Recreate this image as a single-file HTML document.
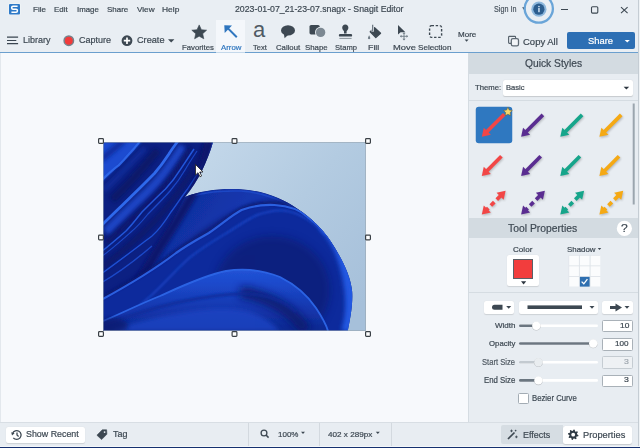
<!DOCTYPE html>
<html><head><meta charset="utf-8">
<style>
*{margin:0;padding:0;box-sizing:border-box}
html,body{width:640px;height:448px;overflow:hidden;background:#e9eef3;font-family:"Liberation Sans",sans-serif}
.a{position:absolute}
.t{position:absolute;white-space:nowrap;transform-origin:0 0;-webkit-text-stroke:0.2px currentColor}
svg{position:absolute;left:0;top:0}
</style></head><body>
<!-- backgrounds -->
<div class="a" style="left:0;top:0;width:640px;height:52px;background:#e9eef3"></div>
<div class="a" style="left:0;top:52px;width:638px;height:1px;background:#6b9fce"></div>
<div class="a" style="left:216px;top:20px;width:29px;height:32px;background:#f4f7fb"></div>
<div class="a" style="left:216px;top:52px;width:29px;height:1px;background:#c4d8ea"></div>
<div class="a" style="left:0;top:53px;width:468px;height:369px;background:#f7f9fc;border-left:1px solid #e3e8ed"></div>
<div class="a" style="left:468px;top:53px;width:170px;height:369px;background:#e8edf2;border-left:1px solid #d5dce2"></div>
<div class="a" style="left:469px;top:53px;width:169px;height:21px;background:#d3dbe1"></div>
<div class="a" style="left:469px;top:100px;width:169px;height:1px;background:#d5dce2"></div>
<div class="a" style="left:469px;top:218px;width:169px;height:20px;background:#d3dbe1"></div>
<div class="a" style="left:469px;top:292px;width:169px;height:1px;background:#d5dce2"></div>
<div class="a" style="left:0;top:422px;width:638px;height:25px;background:#e8edf2;border-top:1px solid #d8dee4"></div>
<div class="a" style="left:638px;top:0;width:1px;height:447px;background:#c5cdd4"></div>
<div class="a" style="left:639px;top:0;width:1px;height:447px;background:#eef2f5"></div>
<div class="a" style="left:0;top:446px;width:640px;height:1px;background:#f3f6f9"></div>
<div class="a" style="left:0;top:447px;width:640px;height:1px;background:#15306f"></div>
<div class="a" style="left:248px;top:423px;width:1px;height:23px;background:#d3d9df"></div>
<div class="a" style="left:319px;top:423px;width:1px;height:23px;background:#d3d9df"></div>
<div class="a" style="left:391px;top:423px;width:1px;height:23px;background:#d3d9df"></div>

<!-- buttons -->
<div class="a" style="left:567px;top:32px;width:68px;height:17.4px;background:#2d6fb4;border-radius:2px"></div>
<div class="a" style="left:503px;top:80px;width:130px;height:16px;background:#fff;border-radius:2px;box-shadow:0 0.5px 1px rgba(0,0,0,.15)"></div>
<div class="a" style="left:6px;top:427px;width:79px;height:16px;background:#fff;border-radius:2px;box-shadow:0 0.5px 1px rgba(0,0,0,.12)"></div>
<div class="a" style="left:501px;top:425px;width:62px;height:18.5px;background:#d6dde3;border-radius:2px 0 0 2px"></div>
<div class="a" style="left:563px;top:426px;width:69px;height:17.5px;background:#fff;border-radius:2.5px;box-shadow:0 0.5px 1px rgba(0,0,0,.15)"></div>
<!-- tool properties controls -->
<div class="a" style="left:507px;top:255px;width:32px;height:31px;background:#fff;border-radius:2px;box-shadow:0 0.5px 1px rgba(0,0,0,.12)"></div>
<div class="a" style="left:513px;top:259px;width:20px;height:19.5px;background:#f23d3d;border:1px solid #5a6068"></div>
<div class="a" style="left:484px;top:301px;width:30px;height:13px;background:#fff;border-radius:2px;box-shadow:0 0.5px 1px rgba(0,0,0,.12)"></div>
<div class="a" style="left:519px;top:301px;width:79px;height:13px;background:#fff;border-radius:2px;box-shadow:0 0.5px 1px rgba(0,0,0,.12)"></div>
<div class="a" style="left:602px;top:301px;width:31px;height:13px;background:#fff;border-radius:2px;box-shadow:0 0.5px 1px rgba(0,0,0,.12)"></div>
<div class="a" style="left:602px;top:319.5px;width:31px;height:12.5px;background:#fff;border:1px solid #a9b1b8;border-radius:1.5px"></div>
<div class="a" style="left:602px;top:338px;width:31px;height:12.5px;background:#fff;border:1px solid #a9b1b8;border-radius:1.5px"></div>
<div class="a" style="left:602px;top:356px;width:31px;height:12.5px;background:#eef1f4;border:1px solid #c5ccd2;border-radius:1.5px"></div>
<div class="a" style="left:602px;top:374.5px;width:31px;height:12.5px;background:#fff;border:1px solid #a9b1b8;border-radius:1.5px"></div>
<div class="a" style="left:518px;top:392.5px;width:11px;height:11px;background:#fff;border:1px solid #a3acb4;border-radius:1.5px"></div>

<!--SVG-->
<svg width="640" height="448" viewBox="0 0 640 448">
<defs>
<clipPath id="imgclip"><rect x="103" y="142" width="263" height="189"/></clipPath>
<clipPath id="massclip"><path d="M103,142 L213,142 C208,160 198,182 185,197 C200,191 218,188.5 240,189.2 C262,190 284,199 297,208.4 C312,218 326,232 335.4,248.7 C344,263 351,278 352.2,291.8 C353,305 350,320 347.8,331 L103,331 Z"/></clipPath>
<linearGradient id="bgG" x1="190" y1="150" x2="366" y2="300" gradientUnits="userSpaceOnUse"><stop offset="0" stop-color="#c4d8ea"/><stop offset="0.5" stop-color="#b3cbe1"/><stop offset="1" stop-color="#a6c0da"/></linearGradient>
<radialGradient id="p2G" cx="272" cy="300" r="88" gradientUnits="userSpaceOnUse" gradientTransform="translate(272 300) scale(0.95 1.05) translate(-272 -300)"><stop offset="0" stop-color="#07145e"/><stop offset="0.5" stop-color="#0b1f7e"/><stop offset="0.78" stop-color="#1330a4"/><stop offset="0.93" stop-color="#1c4ad0"/><stop offset="1" stop-color="#2056e0"/></radialGradient>
<linearGradient id="p1G" x1="190" y1="195" x2="345" y2="300" gradientUnits="userSpaceOnUse"><stop offset="0" stop-color="#1030a0"/><stop offset="0.45" stop-color="#173cb8"/><stop offset="1" stop-color="#2058e2"/></linearGradient>
<linearGradient id="p3G" x1="230" y1="262" x2="230" y2="331" gradientUnits="userSpaceOnUse"><stop offset="0" stop-color="#2458dc"/><stop offset="0.3" stop-color="#1c4acc"/><stop offset="0.7" stop-color="#1436ac"/><stop offset="1" stop-color="#0e2890"/></linearGradient>
<filter id="b05" x="-20%" y="-20%" width="140%" height="140%"><feGaussianBlur stdDeviation="0.5"/></filter>
<filter id="b1" x="-20%" y="-20%" width="140%" height="140%"><feGaussianBlur stdDeviation="1"/></filter>
<filter id="b2" x="-20%" y="-20%" width="140%" height="140%"><feGaussianBlur stdDeviation="2.2"/></filter>
<filter id="b4" x="-30%" y="-30%" width="160%" height="160%"><feGaussianBlur stdDeviation="4"/></filter>
</defs>
<g clip-path="url(#imgclip)">
<rect x="103" y="142" width="263" height="189" fill="url(#bgG)"/>
<g clip-path="url(#massclip)">
<rect x="103" y="142" width="263" height="189" fill="#0c2082"/>
<!-- left petals -->
<path d="M100,142 L142,142 C130,154 116,168 100,184 Z" fill="#1c4bd0" filter="url(#b1)"/>
<path d="M100,160 C108,154 116,148 124,140" fill="none" stroke="#0f2c9c" stroke-width="6" filter="url(#b2)"/>
<path d="M101,181 C106,176 112,170 118.6,165.4 C124,160 130,153 134.25,148.25 C136,146 138,144 140,141" fill="none" stroke="#2d66e8" stroke-width="2.2" filter="url(#b05)"/>
<path d="M104,190 C115,180 128,166 145,148" fill="none" stroke="#1434aa" stroke-width="5" filter="url(#b2)" opacity="0.6"/>
<path d="M112,200 C125,188 140,172 158,150" fill="none" stroke="#07145e" stroke-width="8" filter="url(#b2)" opacity="0.7"/>
<!-- S2 ridge with trailing medium shade on lower-right -->
<path d="M106,232 C118,220 130,208 140,199 C150,190 160,179 166,171 C172,163 178,155 183,146" fill="none" stroke="#1a44c4" stroke-width="9" filter="url(#b2)"/>
<path d="M101,226 C115,212 128,200 134.25,193.6 C142,186 150,178 154.6,173.25 C160,167 165,160 168.6,154.5 C172,149 175,145 178,141" fill="none" stroke="#2f69ec" stroke-width="2.8" filter="url(#b05)"/>
<path d="M106,243 C120,230 140,212 152,200 C165,187 176,172 190,148" fill="none" stroke="#091866" stroke-width="5" filter="url(#b2)" opacity="0.8"/>
<!-- thin lines S3 -->
<path d="M101,252 C110,245 118,238 126,231 C132,225 138,217 142,212 C150,204 158,196 165.5,189 C172,182 177,175 181,168.6 C186,161 190,155 194,149" fill="none" stroke="#2257da" stroke-width="1.5" filter="url(#b05)"/>
<path d="M101,257 C112,249 122,240 131,232 C138,226 144,219 148,214 C156,206 164,198 170,191 C176,184 181,177 185,170 C189,163 193,157 197,151" fill="none" stroke="#1b48c8" stroke-width="1.2" filter="url(#b05)"/>
<path d="M101,268 C125,250 150,228 168,206 C182,188 196,168 209,140" fill="none" stroke="#081664" stroke-width="6" filter="url(#b2)" opacity="0.7"/>
<path d="M101,274 C118,262 136,248 152,236 C160,229 166,220 171,212 C177,204 182,196 187.8,188.7 C193,181 198,173 202.7,165 C207,157 210,150 213.5,141" fill="none" stroke="#1e50d4" stroke-width="1.4" filter="url(#b05)"/>
<path d="M101,283 C120,272 138,258 152,246" fill="none" stroke="#1b48c8" stroke-width="1.4" filter="url(#b05)"/>
<!-- P1 outer petal -->
<path d="M140,290 C160,250 175,215 185,197 C200,191 218,188.5 240,189.2 C262,190 284,199 297,208.4 C312,218 326,232 335.4,248.7 C344,263 351,278 352.2,291.8 C353,305 350,320 347.8,331 L300,331 Z" fill="url(#p1G)" filter="url(#b05)"/>
<path d="M186,198.5 C200,192.5 218,190.5 240,191 C262,192 284,201 297,210.5" fill="none" stroke="#1c46c4" stroke-width="1.5" filter="url(#b05)"/>
<path d="M128,300 C150,262 172,230 188,202 C198,186 205,165 209,142" fill="none" stroke="#09186c" stroke-width="9" filter="url(#b2)"/>
<!-- dark band (P0 -> P2 shadow) -->
<path d="M101,302 C118,292 134,282 150,272 C168,260 185,248 200,236 C215,226 232,214 255,206 C270,202 280,202 290,203" fill="none" stroke="#0a1868" stroke-width="7" filter="url(#b2)" opacity="0.55"/>
<!-- P2 petal (top edge = arc a) -->
<path d="M101,300 C125,287 150,273 176,253 C190,243 200,238 208.8,233 C222,224 232,215 241.6,210 C252,206 263,204.5 274.5,205 C290,206 300,210 307.3,216.8 C318,225 326,232 332,242 C340,255 346,270 349,290 C350,305 349,320 347,331 L101,331 Z" fill="#112b9c" filter="url(#b05)"/>
<ellipse cx="272" cy="290" rx="58" ry="54" fill="#081762" opacity="0.5" filter="url(#b4)"/>
<path d="M101,298.5 C125,285.5 150,271.5 176,251.5 C190,241.5 200,236.5 208.8,231.5 C222,222.5 232,213.5 241.6,208.5 C252,204.5 263,203 274.5,203.5 C290,204.5 300,208.5 307.3,215.3 C318,223.5 326,230.5 332,240.5" fill="none" stroke="#0a1a70" stroke-width="3" filter="url(#b1)" opacity="0.7"/>
<path d="M101,300 C125,287 150,273 176,253 C190,243 200,238 208.8,233 C222,224 232,215 241.6,210 C252,206 263,204.5 274.5,205 C290,206 300,210 307.3,216.8 C318,225 326,232 332,242" fill="none" stroke="#2a5fe0" stroke-width="2.2" filter="url(#b05)"/>
<path d="M140,305 C160,290 178,266 193,255 C205,246 215,240 225,234 C238,226 248,219 257,215 C268,211 276,210 283,210.5 C298,212 312,220 325,235" fill="none" stroke="#1d4acc" stroke-width="2" filter="url(#b1)" opacity="0.8"/>
<path d="M322,226 C337,241 345,263 348.5,290 C350,305 349,320 345,331" fill="none" stroke="#2258e2" stroke-width="8" filter="url(#b2)"/>
<!-- P3 lower fold (top edge = arc b) -->
<path d="M101,322 C120,314 140,304 160,296 C180,287 205,275 226,271 C245,268 262,270 280,277 C296,285 308,296 316,308 C322,317 326,324 328,331 L101,331 Z" fill="url(#p3G)" filter="url(#b05)"/>
<path d="M101,322 C120,314 140,304 160,296 C180,287 205,275 226,271 C245,268 262,270 280,277 C296,285 308,296 316,308 C322,317 326,324 328,331" fill="none" stroke="#2c64e4" stroke-width="1.8" filter="url(#b05)"/>
<path d="M240,292 C268,296 292,310 306,331" fill="none" stroke="#081664" stroke-width="12" opacity="0.8" filter="url(#b4)"/>
<path d="M101,326 C125,318 150,308 180,302 C205,297 232,293 250,294 C270,296 286,302 296,312" fill="none" stroke="#0e2a98" stroke-width="3" filter="url(#b1)" opacity="0.8"/>
<path d="M110,331 C140,320 175,312 210,309 C240,307 262,312 280,331 Z" fill="#1a45c4" filter="url(#b2)" opacity="0.8"/>
<ellipse cx="112" cy="326" rx="16" ry="8" fill="#081664" opacity="0.6" filter="url(#b2)"/>
</g>
<rect x="103.5" y="142.5" width="262" height="188" fill="none" stroke="#9aa6b2" stroke-width="1" opacity="0.6"/>
</g>
<!-- cursor -->
<path d="M195.5,164.5 L195.5,175 L198,172.7 L200,176.8 L201.6,176 L199.7,172 L203,172 Z" fill="#fff" stroke="#222" stroke-width="0.8" stroke-linejoin="round"/>
<!-- handles -->
<g fill="#fff" stroke="#3a4046" stroke-width="1.2">
<rect x="98.6" y="138.6" width="4.8" height="4.8" rx="0.8"/>
<rect x="232.1" y="138.6" width="4.8" height="4.8" rx="0.8"/>
<rect x="365.6" y="138.6" width="4.8" height="4.8" rx="0.8"/>
<rect x="98.6" y="235.1" width="4.8" height="4.8" rx="0.8"/>
<rect x="365.6" y="235.1" width="4.8" height="4.8" rx="0.8"/>
<rect x="98.6" y="331.6" width="4.8" height="4.8" rx="0.8"/>
<rect x="232.1" y="331.6" width="4.8" height="4.8" rx="0.8"/>
<rect x="365.6" y="331.6" width="4.8" height="4.8" rx="0.8"/>
</g>
<g fill="#3d4852" stroke="none">
<!-- logo -->
<rect x="8.5" y="3.5" width="12" height="11.5" rx="1" fill="#f4f7fa"/>
<rect x="9" y="4" width="11" height="10.5" rx="1" fill="#2f7ac8"/>
<path d="M17.6,6.2 H13 Q11.7,6.2 11.7,7.4 V8 Q11.7,9.2 13,9.2 H16.1 Q17.4,9.2 17.4,10.4 V11.1 Q17.4,12.3 16.1,12.3 H11.4" fill="none" stroke="#fff" stroke-width="1.5"/>
<!-- sign in caret -->
<polygon points="522.2,7.3 525.2,7.3 523.7,9.7"/>
<!-- ring + info -->
<circle cx="538.8" cy="8.6" r="14.1" fill="none" stroke="#6aa5d8" stroke-width="2.3"/>
<circle cx="538.9" cy="9.2" r="7.6" fill="#8db7dc"/>
<circle cx="538.9" cy="9.2" r="5.6" fill="#2c5d8e"/>
<rect x="538.2" y="8" width="1.5" height="4.2" fill="#cfe2f2"/>
<circle cx="538.95" cy="6.5" r="0.85" fill="#cfe2f2"/>
<!-- window controls -->
<line x1="561" y1="9.5" x2="568" y2="9.5" stroke="#3d4852" stroke-width="1"/>
<rect x="591.5" y="6.8" width="6.3" height="6.3" rx="1" fill="none" stroke="#3d4852" stroke-width="1.1"/>
<path d="M621,7.2 L627.6,13.2 M627.6,7.2 L621,13.2" stroke="#3d4852" stroke-width="1.1"/>
<!-- hamburger -->
<path d="M7,37.2 H18.1 M7,40.5 H16.3 M7,43.7 H18.1" stroke="#3a4550" stroke-width="1.2"/>
<!-- capture -->
<circle cx="68.8" cy="40.7" r="4.7" fill="#f23b3b" stroke="#76818b" stroke-width="1.5"/>
<!-- create -->
<circle cx="127" cy="40.7" r="5.4" fill="#3d4852"/>
<path d="M123.8,40.7 H130.2 M127,37.5 V43.9" stroke="#fff" stroke-width="1.7"/>
<polygon points="168,39.3 174.4,39.3 171.2,42.6"/>
<!-- star -->
<polygon points="199.2,24.9 201.4,29.7 206.6,30.2 202.7,33.7 203.8,38.8 199.2,36.2 194.6,38.8 195.7,33.7 191.8,30.2 197,29.7" stroke="#3d4852" stroke-width="0.6" stroke-linejoin="round"/>
<!-- arrow tool -->
<line x1="236.8" y1="37.2" x2="227" y2="27.4" stroke="#2f76bf" stroke-width="2"/>
<polygon points="224.3,25.2 232,25.6 224.7,32.9" fill="#2f76bf"/>
<!-- callout -->
<ellipse cx="288" cy="30.4" rx="7" ry="5.2"/>
<polygon points="283.8,33.5 288,35 284.6,38.2"/>
<!-- shape -->
<rect x="309.5" y="25" width="10.2" height="9.4" rx="1.6"/>
<circle cx="320.6" cy="32.4" r="5.6" fill="#e9eef3"/>
<circle cx="320.6" cy="32.4" r="4.7" fill="#7c8892"/>
<!-- stamp -->
<path d="M345.3,24.5 C347.2,24.5 348.4,26 348.4,27.7 C348.4,29.2 347.3,30.2 346.6,31.2 L346.6,33.6 L344,33.6 L344,31.2 C343.3,30.2 342.2,29.2 342.2,27.7 C342.2,26 343.4,24.5 345.3,24.5Z"/>
<rect x="338.9" y="33.9" width="13.2" height="2.7" rx="1.2"/>
<rect x="339.4" y="37.9" width="12.2" height="1" fill="#8a949c"/>
<!-- fill -->
<polygon points="374.6,27.6 380.6,33.2 375.8,37.6 370.2,31.8" stroke="#3d4852" stroke-width="1.2" stroke-linejoin="round"/>
<line x1="372.7" y1="24.8" x2="372.7" y2="31.6" stroke="#e9eef3" stroke-width="2.6"/>
<line x1="372.7" y1="24.8" x2="372.7" y2="31.2" stroke="#5a6670" stroke-width="1.1"/>
<path d="M369.1,35.2 Q367.7,37.4 367.9,38.4 Q369.1,40 370.3,38.4 Q370.5,37.4 369.1,35.2Z" fill="#6e7a84"/>
<!-- move -->
<polygon points="398,25 398,34.6 400.6,32.2 405.4,32.2"/>
<path d="M404,33 V39.6 M400.6,36.3 H407.4" stroke="#6e7a84" stroke-width="0.9"/><polygon points="404,32.2 405.5,33.8 402.5,33.8" fill="#6e7a84"/><polygon points="404,40.4 405.5,38.8 402.5,38.8" fill="#6e7a84"/><polygon points="399.9,36.3 401.5,34.8 401.5,37.8" fill="#6e7a84"/><polygon points="408.1,36.3 406.5,34.8 406.5,37.8" fill="#6e7a84"/>
<!-- selection -->
<rect x="429.6" y="25.6" width="12" height="11.8" rx="2" fill="none" stroke="#3d4852" stroke-width="1.4" stroke-dasharray="2.4 1.7"/>
<polygon points="464.6,39.6 468.6,39.6 466.6,41.8"/>
<!-- copy all -->
<rect x="508.6" y="36.4" width="7" height="7" rx="0.8" fill="none" stroke="#55606a" stroke-width="1.1"/>
<rect x="511.3" y="38.7" width="7.2" height="7.2" rx="1.6" fill="#f2f5f8" stroke="#5f6a74" stroke-width="1.3"/>
<polygon points="624.7,40 629.8,40 627.25,42.5" fill="#fff"/>
</g>
<defs><filter id="blur1" x="-50%" y="-50%" width="200%" height="200%"><feGaussianBlur stdDeviation="0.8"/></filter><filter id="sh" x="-50%" y="-50%" width="200%" height="200%"><feGaussianBlur stdDeviation="0.6"/></filter></defs>
<rect x="475.75" y="106.75" width="36.5" height="36.5" rx="3" fill="#2f78c0"/>
<line x1="486.76" y1="131.74" x2="504.30" y2="114.20" stroke="#f24646" stroke-width="3.7" stroke-linecap="butt"/><polygon points="481.80,136.70 490.85,134.72 483.78,127.65" fill="#f24646"/>
<g transform="translate(0.8,1.2)" opacity="0.22" filter="url(#blur1)"><line x1="486.76" y1="170.94" x2="501.40" y2="156.30" stroke="#000" stroke-width="3.7" stroke-linecap="butt"/><polygon points="481.80,175.90 490.85,173.92 483.78,166.85" fill="#000"/></g>
<line x1="486.76" y1="170.94" x2="501.40" y2="156.30" stroke="#f24646" stroke-width="3.7" stroke-linecap="butt"/><polygon points="481.80,175.90 490.85,173.92 483.78,166.85" fill="#f24646"/>
<g transform="translate(0.8,1.2)" opacity="0.22" filter="url(#blur1)"><line x1="486.76" y1="209.64" x2="500.64" y2="195.76" stroke="#000" stroke-width="3.7" stroke-dasharray="2.2 3.6 4.8 3.6 20"/><polygon points="481.80,214.60 490.85,212.62 483.78,205.55" fill="#000"/><polygon points="505.60,190.80 503.62,199.85 496.55,192.78" fill="#000"/></g>
<line x1="486.76" y1="209.64" x2="500.64" y2="195.76" stroke="#f24646" stroke-width="3.7" stroke-dasharray="2.2 3.6 4.8 3.6 20"/><polygon points="481.80,214.60 490.85,212.62 483.78,205.55" fill="#f24646"/><polygon points="505.60,190.80 503.62,199.85 496.55,192.78" fill="#f24646"/>
<g transform="translate(0.8,1.2)" opacity="0.22" filter="url(#blur1)"><line x1="526.06" y1="131.74" x2="542.90" y2="114.90" stroke="#000" stroke-width="3.7" stroke-linecap="butt"/><polygon points="521.10,136.70 530.15,134.72 523.08,127.65" fill="#000"/></g>
<line x1="526.06" y1="131.74" x2="542.90" y2="114.90" stroke="#5a2d91" stroke-width="3.7" stroke-linecap="butt"/><polygon points="521.10,136.70 530.15,134.72 523.08,127.65" fill="#5a2d91"/>
<g transform="translate(0.8,1.2)" opacity="0.22" filter="url(#blur1)"><line x1="526.06" y1="170.94" x2="540.70" y2="156.30" stroke="#000" stroke-width="3.7" stroke-linecap="butt"/><polygon points="521.10,175.90 530.15,173.92 523.08,166.85" fill="#000"/></g>
<line x1="526.06" y1="170.94" x2="540.70" y2="156.30" stroke="#5a2d91" stroke-width="3.7" stroke-linecap="butt"/><polygon points="521.10,175.90 530.15,173.92 523.08,166.85" fill="#5a2d91"/>
<g transform="translate(0.8,1.2)" opacity="0.22" filter="url(#blur1)"><line x1="526.06" y1="209.64" x2="539.94" y2="195.76" stroke="#000" stroke-width="3.7" stroke-dasharray="2.2 3.6 4.8 3.6 20"/><polygon points="521.10,214.60 530.15,212.62 523.08,205.55" fill="#000"/><polygon points="544.90,190.80 542.92,199.85 535.85,192.78" fill="#000"/></g>
<line x1="526.06" y1="209.64" x2="539.94" y2="195.76" stroke="#5a2d91" stroke-width="3.7" stroke-dasharray="2.2 3.6 4.8 3.6 20"/><polygon points="521.10,214.60 530.15,212.62 523.08,205.55" fill="#5a2d91"/><polygon points="544.90,190.80 542.92,199.85 535.85,192.78" fill="#5a2d91"/>
<g transform="translate(0.8,1.2)" opacity="0.22" filter="url(#blur1)"><line x1="565.26" y1="131.74" x2="582.10" y2="114.90" stroke="#000" stroke-width="3.7" stroke-linecap="butt"/><polygon points="560.30,136.70 569.35,134.72 562.28,127.65" fill="#000"/></g>
<line x1="565.26" y1="131.74" x2="582.10" y2="114.90" stroke="#16a58b" stroke-width="3.7" stroke-linecap="butt"/><polygon points="560.30,136.70 569.35,134.72 562.28,127.65" fill="#16a58b"/>
<g transform="translate(0.8,1.2)" opacity="0.22" filter="url(#blur1)"><line x1="565.26" y1="170.94" x2="579.90" y2="156.30" stroke="#000" stroke-width="3.7" stroke-linecap="butt"/><polygon points="560.30,175.90 569.35,173.92 562.28,166.85" fill="#000"/></g>
<line x1="565.26" y1="170.94" x2="579.90" y2="156.30" stroke="#16a58b" stroke-width="3.7" stroke-linecap="butt"/><polygon points="560.30,175.90 569.35,173.92 562.28,166.85" fill="#16a58b"/>
<g transform="translate(0.8,1.2)" opacity="0.22" filter="url(#blur1)"><line x1="565.26" y1="209.64" x2="579.14" y2="195.76" stroke="#000" stroke-width="3.7" stroke-dasharray="2.2 3.6 4.8 3.6 20"/><polygon points="560.30,214.60 569.35,212.62 562.28,205.55" fill="#000"/><polygon points="584.10,190.80 582.12,199.85 575.05,192.78" fill="#000"/></g>
<line x1="565.26" y1="209.64" x2="579.14" y2="195.76" stroke="#16a58b" stroke-width="3.7" stroke-dasharray="2.2 3.6 4.8 3.6 20"/><polygon points="560.30,214.60 569.35,212.62 562.28,205.55" fill="#16a58b"/><polygon points="584.10,190.80 582.12,199.85 575.05,192.78" fill="#16a58b"/>
<g transform="translate(0.8,1.2)" opacity="0.22" filter="url(#blur1)"><line x1="604.36" y1="131.74" x2="621.20" y2="114.90" stroke="#000" stroke-width="3.7" stroke-linecap="butt"/><polygon points="599.40,136.70 608.45,134.72 601.38,127.65" fill="#000"/></g>
<line x1="604.36" y1="131.74" x2="621.20" y2="114.90" stroke="#f5a914" stroke-width="3.7" stroke-linecap="butt"/><polygon points="599.40,136.70 608.45,134.72 601.38,127.65" fill="#f5a914"/>
<g transform="translate(0.8,1.2)" opacity="0.22" filter="url(#blur1)"><line x1="604.36" y1="170.94" x2="619.00" y2="156.30" stroke="#000" stroke-width="3.7" stroke-linecap="butt"/><polygon points="599.40,175.90 608.45,173.92 601.38,166.85" fill="#000"/></g>
<line x1="604.36" y1="170.94" x2="619.00" y2="156.30" stroke="#f5a914" stroke-width="3.7" stroke-linecap="butt"/><polygon points="599.40,175.90 608.45,173.92 601.38,166.85" fill="#f5a914"/>
<g transform="translate(0.8,1.2)" opacity="0.22" filter="url(#blur1)"><line x1="604.36" y1="209.64" x2="618.24" y2="195.76" stroke="#000" stroke-width="3.7" stroke-dasharray="2.2 3.6 4.8 3.6 20"/><polygon points="599.40,214.60 608.45,212.62 601.38,205.55" fill="#000"/><polygon points="623.20,190.80 621.22,199.85 614.15,192.78" fill="#000"/></g>
<line x1="604.36" y1="209.64" x2="618.24" y2="195.76" stroke="#f5a914" stroke-width="3.7" stroke-dasharray="2.2 3.6 4.8 3.6 20"/><polygon points="599.40,214.60 608.45,212.62 601.38,205.55" fill="#f5a914"/><polygon points="623.20,190.80 621.22,199.85 614.15,192.78" fill="#f5a914"/>
<polygon points="507.90,107.30 509.25,110.04 512.27,110.48 510.09,112.61 510.60,115.62 507.90,114.20 505.20,115.62 505.71,112.61 503.53,110.48 506.55,110.04" fill="#f5d66b" stroke="#6b5a2a" stroke-width="0.5" stroke-linejoin="round"/>
<polygon points="623.6,86.8 629.2,86.8 626.4,89.4" fill="#2d3640"/>
<rect x="632.7" y="103.5" width="2" height="101" fill="#9ba5ae"/>
<circle cx="624.4" cy="228.4" r="7.6" fill="#fff"/>
<polygon points="521,281.3 526.2,281.3 523.6,284.4" fill="#2d3640"/>
<rect x="568.5" y="255" width="31.6" height="31.6" fill="#dfe4e9" rx="1"/>
<rect x="569.20" y="255.70" width="9.7" height="9.7" fill="#fbfcfd"/>
<rect x="579.90" y="255.70" width="9.7" height="9.7" fill="#fbfcfd"/>
<rect x="590.60" y="255.70" width="9.7" height="9.7" fill="#fbfcfd"/>
<rect x="569.20" y="266.30" width="9.7" height="9.7" fill="#fbfcfd"/>
<rect x="579.90" y="266.30" width="9.7" height="9.7" fill="#fbfcfd"/>
<rect x="590.60" y="266.30" width="9.7" height="9.7" fill="#fbfcfd"/>
<rect x="569.20" y="276.90" width="9.7" height="9.7" fill="#fbfcfd"/>
<rect x="579.90" y="276.90" width="9.7" height="9.7" fill="#2f6fb0"/>
<rect x="590.60" y="276.90" width="9.7" height="9.7" fill="#fbfcfd"/>
<path d="M581.6,281.6 L583.8,283.8 L587.4,279.2" fill="none" stroke="#fff" stroke-width="1.3"/>
<polygon points="597.8,248 601.2,248 599.5,250" fill="#3d4852"/>
<path d="M494.5,304.8 H502.5 V309.8 H494.5 Q492,309.8 492,307.3 Q492,304.8 494.5,304.8Z" fill="#3d4852"/>
<polygon points="506.2,306.1 511.2,306.1 508.7,308.7" fill="#3d4852"/>
<polygon points="589.5,306.1 594.5,306.1 592.0,308.7" fill="#3d4852"/>
<polygon points="624.5,306.1 629.5,306.1 627.0,308.7" fill="#3d4852"/>
<rect x="527.5" y="305.4" width="54.5" height="3.6" fill="#3d4852"/>
<polygon points="610,306 615.5,306 615.5,303.5 622,307.5 615.5,311.5 615.5,309 610,309" fill="#3d4852"/>
<rect x="519" y="324.5" width="79" height="2.6" rx="1.3" fill="#fff"/>
<rect x="519" y="324.5" width="17.3" height="2.6" rx="1.3" fill="#6b7680"/>
<circle cx="536.3" cy="326.2" r="4.4" fill="#000" opacity="0.18" filter="url(#sh)"/>
<circle cx="536.3" cy="325.8" r="4.2" fill="#fff"/>
<rect x="519" y="342.2" width="79" height="2.6" rx="1.3" fill="#fff"/>
<rect x="519" y="342.2" width="74.2" height="2.6" rx="1.3" fill="#6b7680"/>
<circle cx="593.2" cy="343.9" r="4.4" fill="#000" opacity="0.18" filter="url(#sh)"/>
<circle cx="593.2" cy="343.5" r="4.2" fill="#fff"/>
<rect x="519" y="361.0" width="79" height="2.6" rx="1.3" fill="#fff"/>
<rect x="519" y="361.0" width="19.4" height="2.6" rx="1.3" fill="#c3cad0"/>
<circle cx="538.4" cy="362.7" r="4.4" fill="#000" opacity="0.18" filter="url(#sh)"/>
<circle cx="538.4" cy="362.3" r="4.2" fill="#e9edf0"/>
<rect x="519" y="379.1" width="79" height="2.6" rx="1.3" fill="#fff"/>
<rect x="519" y="379.1" width="19.4" height="2.6" rx="1.3" fill="#6b7680"/>
<circle cx="538.4" cy="380.8" r="4.4" fill="#000" opacity="0.18" filter="url(#sh)"/>
<circle cx="538.4" cy="380.4" r="4.2" fill="#fff"/>
<g fill="none" stroke="#3d4852" stroke-width="1.3"><path d="M12.6,433.4 A4.4,4.4 0 1 1 13.3,437.8"/><path d="M17,432.6 V435 L18.6,436.4"/></g>
<polygon points="11.2,432.3 14.6,433.2 12,435.6" fill="#3d4852"/>
<path d="M96.9,435.2 L102.3,429.8 L106.6,429.8 L106.9,434.2 L101.6,439.6 Z" fill="#3d4852" stroke="#3d4852" stroke-width="0.6" stroke-linejoin="round"/>
<circle cx="104.6" cy="432.1" r="0.9" fill="#e8edf2"/>
<circle cx="264" cy="433" r="2.9" fill="none" stroke="#3d4852" stroke-width="1.3"/><line x1="266" y1="435" x2="268.6" y2="437.6" stroke="#3d4852" stroke-width="1.5"/>
<polygon points="301,431.8 305,431.8 303,434" fill="#3d4852"/>
<polygon points="375.8,431.8 379.8,431.8 377.8,434" fill="#3d4852"/>
<line x1="508" y1="439" x2="514.5" y2="432.5" stroke="#3d4852" stroke-width="1.7"/>
<path d="M511.5,429.6 V432.2 M510.2,430.9 H512.8 M516.4,435.6 V438.2 M515.1,436.9 H517.7 M515.6,429.8 V431.4 M514.8,430.6 H516.4" stroke="#3d4852" stroke-width="0.9"/>
<polygon points="578.47,435.22 578.27,436.24 576.64,436.54 576.21,437.17 576.56,438.80 575.70,439.37 574.33,438.43 573.58,438.58 572.68,439.97 571.66,439.77 571.36,438.14 570.73,437.71 569.10,438.06 568.53,437.20 569.47,435.83 569.32,435.08 567.93,434.18 568.13,433.16 569.76,432.86 570.19,432.23 569.84,430.60 570.70,430.03 572.07,430.97 572.82,430.82 573.72,429.43 574.74,429.63 575.04,431.26 575.67,431.69 577.30,431.34 577.87,432.20 576.93,433.57 577.08,434.32" fill="#2f3a44"/>
<circle cx="573.2" cy="434.7" r="1.9" fill="#fff"/>
</svg>
<div class="t" style="left:253.0px;top:18.6px;font-size:22px;line-height:22px;color:#4f5a64;-webkit-text-stroke:0">a</div>
<div class="t" style="left:32.86px;top:6.00px;font-size:7.97px;line-height:7.97px;color:#3d4852;transform:scaleX(1.010);">File</div>
<div class="t" style="left:54.37px;top:6.00px;font-size:7.97px;line-height:7.97px;color:#3d4852;transform:scaleX(0.994);">Edit</div>
<div class="t" style="left:76.54px;top:6.00px;font-size:7.97px;line-height:7.97px;color:#3d4852;transform:scaleX(0.986);">Image</div>
<div class="t" style="left:107.10px;top:6.00px;font-size:7.97px;line-height:7.97px;color:#3d4852;transform:scaleX(1.001);">Share</div>
<div class="t" style="left:136.67px;top:6.00px;font-size:7.97px;line-height:7.97px;color:#3d4852;transform:scaleX(1.026);">View</div>
<div class="t" style="left:162.33px;top:6.00px;font-size:7.97px;line-height:7.97px;color:#3d4852;transform:scaleX(1.056);">Help</div>
<div class="t" style="left:235.16px;top:4.00px;font-size:9.86px;line-height:9.86px;color:#3d4852;transform:scaleX(0.890);">2023-01-07_21-23-07.snagx - Snagit Editor</div>
<div class="t" style="left:494.14px;top:6.00px;font-size:8.26px;line-height:8.26px;color:#4a555f;transform:scaleX(0.872);">Sign In</div>
<div class="t" style="left:23.18px;top:35.00px;font-size:9.71px;line-height:9.71px;color:#3d4852;transform:scaleX(0.926);">Library</div>
<div class="t" style="left:78.85px;top:35.00px;font-size:9.71px;line-height:9.71px;color:#3d4852;transform:scaleX(0.929);">Capture</div>
<div class="t" style="left:136.54px;top:35.00px;font-size:9.71px;line-height:9.71px;color:#3d4852;transform:scaleX(0.945);">Create</div>
<div class="t" style="left:182.38px;top:44.00px;font-size:7.97px;line-height:7.97px;color:#3d4852;transform:scaleX(0.975);">Favorites</div>
<div class="t" style="left:220.60px;top:44.00px;font-size:7.97px;line-height:7.97px;color:#2f76bf;transform:scaleX(0.981);">Arrow</div>
<div class="t" style="left:252.55px;top:44.00px;font-size:7.97px;line-height:7.97px;color:#3d4852;transform:scaleX(0.943);">Text</div>
<div class="t" style="left:276.11px;top:44.00px;font-size:7.97px;line-height:7.97px;color:#3d4852;transform:scaleX(0.974);">Callout</div>
<div class="t" style="left:305.11px;top:44.00px;font-size:7.97px;line-height:7.97px;color:#3d4852;transform:scaleX(0.986);">Shape</div>
<div class="t" style="left:334.62px;top:44.00px;font-size:7.97px;line-height:7.97px;color:#3d4852;transform:scaleX(0.952);">Stamp</div>
<div class="t" style="left:368.04px;top:44.00px;font-size:7.97px;line-height:7.97px;color:#3d4852;transform:scaleX(1.110);">Fill</div>
<div class="t" style="left:393.00px;top:44.00px;font-size:7.97px;line-height:7.97px;color:#3d4852;transform:scaleX(1.176);">Move</div>
<div class="t" style="left:418.34px;top:44.00px;font-size:7.97px;line-height:7.97px;color:#3d4852;transform:scaleX(1.019);">Selection</div>
<div class="t" style="left:457.86px;top:32.00px;font-size:7.10px;line-height:7.10px;color:#3d4852;transform:scaleX(1.133);">More</div>
<div class="t" style="left:523.13px;top:37.00px;font-size:9.57px;line-height:9.57px;color:#3d4852;transform:scaleX(0.992);">Copy All</div>
<div class="t" style="left:588.13px;top:36.00px;font-size:9.57px;line-height:9.57px;color:#ffffff;transform:scaleX(0.980);">Share</div>
<div class="t" style="left:524.79px;top:58.00px;font-size:10.58px;line-height:10.58px;color:#3d4852;transform:scaleX(0.971);">Quick Styles</div>
<div class="t" style="left:474.55px;top:84.00px;font-size:7.25px;line-height:7.25px;color:#3d4852;transform:scaleX(1.064);">Theme:</div>
<div class="t" style="left:506.19px;top:84.00px;font-size:7.25px;line-height:7.25px;color:#3d4852;transform:scaleX(1.044);">Basic</div>
<div class="t" style="left:508.09px;top:222.00px;font-size:11.74px;line-height:11.74px;color:#3d4852;transform:scaleX(0.884);">Tool Properties</div>
<div class="t" style="left:621.12px;top:223.00px;font-size:11.30px;line-height:11.30px;color:#3d4852;transform:scaleX(1.069);">?</div>
<div class="t" style="left:513.29px;top:246.00px;font-size:7.83px;line-height:7.83px;color:#3d4852;transform:scaleX(1.035);">Color</div>
<div class="t" style="left:567.11px;top:246.00px;font-size:7.83px;line-height:7.83px;color:#3d4852;transform:scaleX(1.009);">Shadow</div>
<div class="t" style="left:494.92px;top:322.00px;font-size:7.90px;line-height:7.90px;color:#3d4852;transform:scaleX(1.016);">Width</div>
<div class="t" style="left:619.83px;top:323.00px;font-size:6.96px;line-height:6.96px;color:#3d4852;transform:scaleX(1.205);">10</div>
<div class="t" style="left:488.61px;top:340.00px;font-size:7.75px;line-height:7.75px;color:#3d4852;transform:scaleX(1.004);">Opacity</div>
<div class="t" style="left:615.35px;top:340.00px;font-size:7.75px;line-height:7.75px;color:#3d4852;transform:scaleX(1.048);">100</div>
<div class="t" style="left:482.42px;top:358.00px;font-size:8.99px;line-height:8.99px;color:#4f5962;transform:scaleX(0.845);">Start Size</div>
<div class="t" style="left:624.15px;top:358.00px;font-size:7.83px;line-height:7.83px;color:#a0a8b0;transform:scaleX(1.115);">3</div>
<div class="t" style="left:484.08px;top:376.00px;font-size:8.70px;line-height:8.70px;color:#3d4852;transform:scaleX(0.898);">End Size</div>
<div class="t" style="left:624.15px;top:376.00px;font-size:7.83px;line-height:7.83px;color:#3d4852;transform:scaleX(1.115);">3</div>
<div class="t" style="left:531.88px;top:394.00px;font-size:8.99px;line-height:8.99px;color:#3d4852;transform:scaleX(0.863);">Bezier Curve</div>
<div class="t" style="left:26.46px;top:430.00px;font-size:8.91px;line-height:8.91px;color:#3d4852;transform:scaleX(0.996);">Show Recent</div>
<div class="t" style="left:112.52px;top:430.00px;font-size:8.91px;line-height:8.91px;color:#3d4852;transform:scaleX(1.008);">Tag</div>
<div class="t" style="left:277.86px;top:431.00px;font-size:7.97px;line-height:7.97px;color:#3d4852;transform:scaleX(1.003);">100%</div>
<div class="t" style="left:327.84px;top:431.00px;font-size:7.97px;line-height:7.97px;color:#3d4852;transform:scaleX(1.020);">402 x 289px</div>
<div class="t" style="left:523.03px;top:430.00px;font-size:9.78px;line-height:9.78px;color:#3d4852;transform:scaleX(0.919);">Effects</div>
<div class="t" style="left:583.01px;top:430.00px;font-size:9.78px;line-height:9.78px;color:#3d4852;transform:scaleX(0.950);">Properties</div>

</body></html>
